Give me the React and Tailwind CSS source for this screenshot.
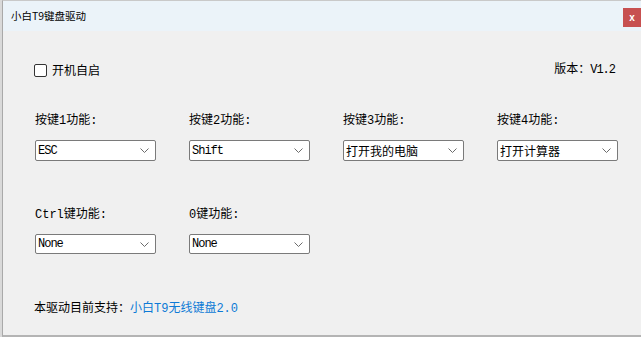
import React from 'react';

const mono = { fontFamily: '"Liberation Mono", "Noto Sans CJK SC", monospace' };
const cjk = { fontFamily: '"Noto Sans CJK SC", "Liberation Sans", sans-serif' };

function Chevron() {
  return (
    <svg width="9" height="5" viewBox="0 0 9 5" className="shrink-0">
      <polyline points="0.5,0.5 4.5,4.5 8.5,0.5" fill="none" stroke="#6b6b6b" strokeWidth="1" />
    </svg>
  );
}

function Select({ value, latin, h }) {
  return (
    <div
      className={`w-[121px] ${h} bg-white border border-[#7a7a7a] rounded-[2px] flex items-center justify-between pl-[2px] pr-[6px]`}
    >
      <span
        className={`${latin ? 'text-[12px] font-medium tracking-[-1px]' : 'text-[12px]'} leading-none text-black`}
        style={latin ? mono : cjk}
      >
        {value}
      </span>
      <Chevron />
    </div>
  );
}

function Field({ label, value, latin, h }) {
  return (
    <div className="flex flex-col min-w-0">
      <div className="h-[16px] flex items-center text-[12px] leading-none text-black whitespace-nowrap" style={mono}>
        {label}
      </div>
      <div className="mt-[11px]">
        <Select value={value} latin={latin} h={h} />
      </div>
    </div>
  );
}

export default function App() {
  const row1 = [
    { label: '按键1功能:', value: 'ESC', latin: true },
    { label: '按键2功能:', value: 'Shift', latin: true },
    { label: '按键3功能:', value: '打开我的电脑', latin: false },
    { label: '按键4功能:', value: '打开计算器', latin: false },
  ];
  const row2 = [
    { label: 'Ctrl键功能:', value: 'None', latin: true },
    { label: '0键功能:', value: 'None', latin: true },
  ];

  return (
    <div className="w-[641px] h-[337px] flex overflow-hidden bg-[#e6e6e6]">
      <div className="w-[2px] shrink-0 bg-[#d9d9d9]" />
      <div className="flex-1 min-w-0 flex flex-col border-l border-[#a9a9a9] border-t border-t-[#c9c9c9] border-b-2 border-b-[#b4b4b4]">
        {/* title bar */}
        <div className="h-[30px] bg-[#ebf3f9] flex items-start justify-between">
          <div className="pl-[8px] h-[30px] flex items-center text-[10.5px] text-black" style={cjk}>
            小白T9键盘驱动
          </div>
          <div className="mt-[7px] w-[18px] h-[19px] shrink-0 bg-[#c75050] flex items-center justify-center">
            <span className="text-white text-[10px] font-bold leading-none" style={{ fontFamily: '"Liberation Sans", sans-serif' }}>
              x
            </span>
          </div>
        </div>

        {/* body */}
        <div className="flex-1 min-w-0 bg-[#f0f0f0] flex flex-col pl-[32px] pr-[26px]">
          <div className="mt-[32px] h-[14px] flex items-center justify-between">
            <div className="flex items-center -ml-[1px]">
              <div className="w-[13px] h-[13px] bg-white border border-[#333333] rounded-[2px]" />
              <span className="ml-[5px] text-[12px] leading-none text-black" style={cjk}>
                开机自启
              </span>
            </div>
            <span className="text-[12px] leading-none text-black whitespace-nowrap" style={mono}>
              版本：<span className="tracking-[-1px]">V1.2</span>
            </span>
          </div>

          <div className="mt-[36px] grid grid-cols-[154px_154px_154px_1fr]">
            {row1.map((f) => (
              <Field key={f.label} {...f} h="h-[21px]" />
            ))}
          </div>

          <div className="mt-[46px] grid grid-cols-[154px_154px_154px_1fr]">
            {row2.map((f) => (
              <Field key={f.label} {...f} h="h-[20px]" />
            ))}
          </div>

          <div className="mt-[47px] h-[16px] flex items-center text-[12px] leading-none -ml-[1px] whitespace-nowrap" style={mono}>
            <span className="text-black">本驱动目前支持：</span>
            <span className="text-[#0d7ad6]">小白T9无线键盘2.0</span>
          </div>
        </div>
      </div>
    </div>
  );
}
